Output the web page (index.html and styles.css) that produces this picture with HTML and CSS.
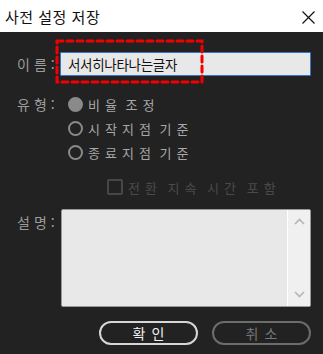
FILE: index.html
```html
<!DOCTYPE html>
<html lang="ko">
<head>
    <meta charset="UTF-8">
    <meta name="viewport" content="width=device-width, initial-scale=1.0">
    <title>사전 설정 저장</title>
    <link rel="stylesheet" href="styles.css">
</head>
<body>

    <header class="titlebar">
        <span class="title">사전 설정 저장</span>
        <svg class="close" width="13" height="13" viewBox="0 0 13 13">
            <path d="M0.5 0.5 L12.5 12.5 M12.5 0.5 L0.5 12.5" stroke="#111" stroke-width="1.2" fill="none"/>
        </svg>
    </header>

    <div class="dialog">
        <div class="row name-row">
            <label class="label">이름:</label>
            <div class="name-input">서서히나타나는글자</div>
        </div>

        <div class="row type-row">
            <span class="label">유형:</span>
            <div class="options">
                <div class="radio-item"><span class="radio checked"></span><span class="opt-text">비율 조정</span></div>
                <div class="radio-item"><span class="radio"></span><span class="opt-text">시작지점 기준</span></div>
                <div class="radio-item"><span class="radio"></span><span class="opt-text">종료지점 기준</span></div>
                <div class="check-item"><span class="checkbox"></span><span class="check-text">전환 지속 시간 포함</span></div>
            </div>
        </div>

        <div class="row desc-row">
            <span class="label desc-label">설명:</span>
            <div class="textarea">
                <div class="text-space"></div>
                <div class="scrollbar">
                    <svg width="11" height="7" viewBox="0 0 11 7"><path d="M1 6 L5.5 1.5 L10 6" stroke="#b5b5b5" stroke-width="1.6" fill="none"/></svg>
                    <svg width="11" height="7" viewBox="0 0 11 7"><path d="M1 1 L5.5 5.5 L10 1" stroke="#b5b5b5" stroke-width="1.6" fill="none"/></svg>
                </div>
            </div>
        </div>

        <div class="buttons">
            <button class="btn ok">확인</button>
            <button class="btn cancel">취소</button>
        </div>

        <!-- 강조 표시 -->
        <svg class="highlight" width="149" height="45" viewBox="0 0 149 45">
            <rect x="2" y="2" width="145" height="41" fill="none" stroke="#f00000" stroke-width="3" stroke-dasharray="6 4" stroke-linecap="round"/>
        </svg>
    </div>

</body>
</html>
```

FILE: styles.css
```css
body {
    margin: 0;
    padding: 0;
    width: 323px;
    height: 354px;
    background-color: #222222;
    font-family: "Noto Sans CJK KR", "Noto Sans", sans-serif;
    overflow: hidden;
}

.titlebar {
    height: 32px;
    background-color: white;
    display: flex;
    align-items: center;
    justify-content: space-between;
    padding: 0 8px 0 5px;
}

.title {
    font-size: 15px;
    color: #111;
    letter-spacing: 0.5px;
}

.close {
    margin-top: 2px;
}

.dialog {
    position: relative;
    padding: 20px 12px 0 0;
}

.row {
    display: grid;
    grid-template-columns: 60px 1fr;
}

.label {
    font-size: 14px;
    color: #9c9c9c;
    letter-spacing: 4px;
    padding-left: 17px;
    line-height: 24px;
}

.name-input {
    height: 22px;
    line-height: 22px;
    background-color: #e8e8e8;
    border: 1px solid #3479c9;
    border-radius: 1px;
    padding-left: 7px;
    font-size: 13.5px;
    color: #111;
    letter-spacing: -0.3px;
}

.type-row {
    margin-top: 16px;
}

.options {
    display: flex;
    flex-direction: column;
    padding-left: 8px;
}

.radio-item {
    display: flex;
    align-items: center;
    height: 24px;
}

.radio {
    width: 11px;
    height: 11px;
    border: 2px solid #8a8a8a;
    border-radius: 50%;
    margin-right: 5px;
}

.radio.checked {
    background-color: #8a8a8a;
}

.opt-text {
    font-size: 13px;
    color: #a8a8a8;
    letter-spacing: 5px;
    word-spacing: -5px;
}

.check-item {
    display: flex;
    align-items: center;
    height: 22px;
    margin-top: 12px;
    margin-left: 39px;
}

.checkbox {
    width: 12px;
    height: 12px;
    border: 2px solid #474747;
    border-radius: 2px;
    margin-right: 5px;
}

.check-text {
    font-size: 13px;
    color: #4a4a4a;
    letter-spacing: 5px;
    word-spacing: -3px;
}

.desc-row {
    margin-top: 11px;
}

.desc-label {
    padding-top: 1px;
}

.textarea {
    height: 96px;
    margin-left: 1px;
    border: 1px solid #999;
    border-radius: 2px;
    background-color: #e8e8e8;
    display: flex;
}

.text-space {
    flex: 1;
}

.scrollbar {
    width: 22px;
    border-left: 1px solid #ffffff;
    background-color: #f0f0f0;
    display: flex;
    flex-direction: column;
    align-items: center;
    justify-content: space-between;
    padding: 8px 0 8px;
}

.buttons {
    display: flex;
    justify-content: flex-end;
    gap: 14px;
    margin-top: 14px;
}

.btn {
    width: 99px;
    height: 24px;
    border-radius: 12px;
    background-color: transparent;
    font-family: "Noto Sans CJK KR", "Noto Sans", sans-serif;
    font-size: 14px;
    letter-spacing: 6px;
    padding: 0 0 0 6px;
    line-height: 20px;
}

.ok {
    border: 2px solid #d6d6d6;
    color: #f2f2f2;
}

.cancel {
    border: 2px solid #6c6c6c;
    color: #767676;
}

.highlight {
    position: absolute;
    left: 55px;
    top: 7px;
}
```
